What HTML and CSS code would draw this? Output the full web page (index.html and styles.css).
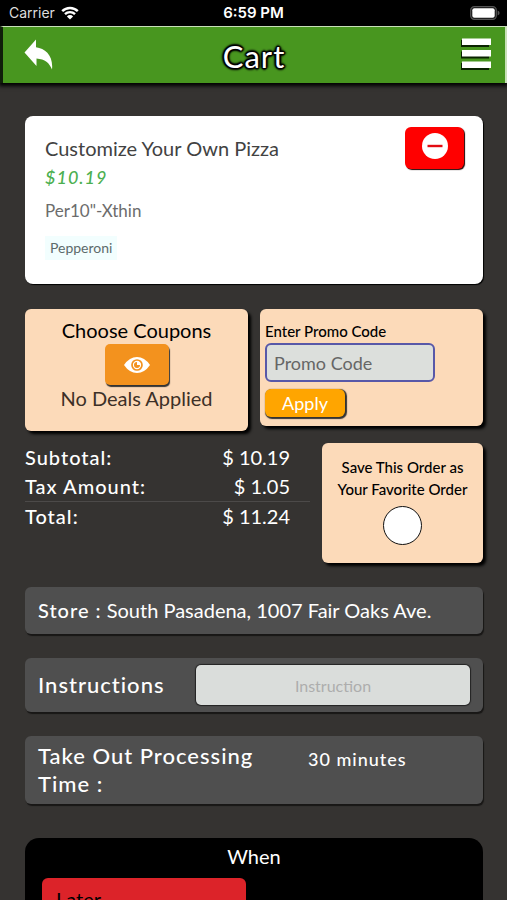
FILE: index.html
```html
<!DOCTYPE html>
<html lang="en">
<head>
<meta charset="utf-8">
<meta name="viewport" content="width=device-width, initial-scale=1">
<title>Cart</title>
<link rel="stylesheet" href="styles.css">
</head>
<body>
<div class="app">
  <div class="status">
    <div class="status-carrier">
      <span>Carrier</span>
      <svg class="wifi" viewBox="0 0 18 14" aria-hidden="true">
        <path d="M1.2 5.2a11 11 0 0 1 15.6 0M4 8.2a7 7 0 0 1 10 0" fill="none" stroke="#fff" stroke-width="2.4"/>
        <path d="M9 13.5 5.9 10.4a4.4 4.4 0 0 1 6.2 0z" fill="#fff"/>
      </svg>
    </div>
    <span class="status-time">6:59 PM</span>
    <svg class="battery" viewBox="0 0 30 14" aria-hidden="true">
      <rect x=".7" y=".7" width="25.6" height="12.6" rx="3.6" fill="#111" stroke="#555" stroke-width="1.2"/>
      <rect x="2.3" y="2.3" width="22.4" height="9.4" rx="2" fill="#fff"/>
      <path d="M27.6 4.6q2 .6 2 2.4t-2 2.4z" fill="#555"/>
    </svg>
  </div>

  <header class="topbar">
    <button class="icon-button back-button" type="button" aria-label="Back">
      <svg class="back" viewBox="0 0 29 31" aria-hidden="true">
        <path d="M.5 13.5 12 .5v7.8C21.500 9.500 29.500 17 28 30.500 25.500 24 21 20.200 12.500 19.500v7.500z" fill="#fff"/>
      </svg>
    </button>
    <h1 class="title">Cart</h1>
    <button class="icon-button menu-button" type="button" aria-label="Menu">
      <svg class="menu" viewBox="0 0 30 32" aria-hidden="true">
        <path d="M0 2h28v7H0zM0 13.500h28v7H0zM0 25h28v7H0z" fill="#0a2300"/>
        <path d="M1 .5h29v6.500H1zM1 12h29v6.500H1zM1 23.500h29v6.500H1z" fill="#fff"/>
      </svg>
    </button>
  </header>

  <main class="content">
    <section class="item">
      <div class="item-info">
        <h2 class="item-name">Customize Your Own Pizza</h2>
        <p class="item-price">$10.19</p>
        <p class="item-size">Per10"-Xthin</p>
        <span class="topping">Pepperoni</span>
      </div>
      <button class="remove" type="button" aria-label="Remove item">
        <svg class="minus" viewBox="0 0 26 26" aria-hidden="true">
          <circle cx="13" cy="13" r="13" fill="#fff"/>
          <path d="M5.500 13h15" stroke="#e30b12" stroke-width="2.400"/>
        </svg>
      </button>
    </section>

    <div class="deals">
      <section class="panel coupons">
        <h2 class="coupons-title">Choose Coupons</h2>
        <button class="view" type="button" aria-label="View coupons">
          <svg class="eye" viewBox="0 0 26 16" aria-hidden="true">
            <path d="M0 8Q5.500 0 13 0t13 8q-5.500 8-13 8T0 8z" fill="#fff"/>
            <circle cx="13" cy="8" r="5" fill="#fff" stroke="#f3921e" stroke-width="1.700"/>
            <path d="M13 5a3 3 0 1 0 3 3h-3z" fill="#f3921e"/>
          </svg>
        </button>
        <p class="coupons-state">No Deals Applied</p>
      </section>
      <form class="panel promo">
        <label class="promo-label" for="promo">Enter Promo Code</label>
        <input class="promo-input" id="promo" type="text" placeholder="Promo Code">
        <button class="apply" type="button">Apply</button>
      </form>
    </div>

    <div class="summary">
      <table class="totals">
        <tbody>
          <tr><th scope="row">Subtotal:</th><td>$ 10.19</td></tr>
          <tr><th scope="row">Tax Amount:</th><td>$ 1.05</td></tr>
          <tr class="total"><th scope="row">Total:</th><td>$ 11.24</td></tr>
        </tbody>
      </table>
      <div class="panel favorite">
        <label for="favorite">Save This Order as Your Favorite Order</label>
        <input class="favorite-check" id="favorite" type="checkbox">
      </div>
    </div>

    <section class="bar">
      <p class="store"><span class="store-label">Store :</span> South Pasadena, 1007 Fair Oaks Ave.</p>
    </section>

    <section class="bar instructions">
      <label class="instruction-label" for="instruction">Instructions</label>
      <input class="instruction-input" id="instruction" type="text" placeholder="Instruction">
    </section>

    <section class="bar processing">
      <p class="processing-label">Take Out Processing Time :</p>
      <p class="minutes">30 minutes</p>
    </section>

    <section class="when">
      <h2 class="when-title">When</h2>
      <button class="later" type="button">Later</button>
    </section>
  </main>
</div>
</body>
</html>
```
FILE: styles.css
```css
* {
  box-sizing: border-box;
}

body,
h1,
h2,
p {
  margin: 0;
  font-weight: 400;
}

body {
  background: #353331;
  color: #fff;
  font-family: Lato, "Liberation Sans", sans-serif;
  font-size: 20px;
  line-height: 28px;
}

h2 {
  font-size: 20px;
}

button,
input {
  margin: 0;
  font: inherit;
}

button {
  border: 0;
  padding: 0;
  cursor: pointer;
}

svg {
  display: block;
}

.app {
  display: flex;
  flex-direction: column;
  height: 100vh;
}

/* Status bar */
.status {
  display: grid;
  grid-template-columns: 1fr auto 1fr;
  align-items: center;
  flex: none;
  height: 26px;
  padding: 0 7px;
  background: #000;
  font-family: Inter, "Liberation Sans", sans-serif;
  font-size: 14px;
  line-height: 26px;
}

.status-carrier {
  display: flex;
  align-items: center;
  gap: 6px;
  padding-left: 2px;
  color: #ddd;
}

.status-time {
  font-size: 15px;
  font-weight: 600;
}

.wifi {
  width: 18px;
  height: 14px;
}

.battery {
  justify-self: end;
  width: 30px;
  height: 14px;
}

/* Header */
.topbar {
  display: grid;
  grid-template-columns: 1fr auto 1fr;
  align-items: center;
  flex: none;
  height: 57px;
  padding: 0 14px 2px;
  background: #48961f;
  border: solid #c8e0b8;
  border-width: 1px 2px 0 0;
  border-left: 3px solid #10200a;
  box-shadow: 0 2px 4px 1px #000;
}

.icon-button {
  background: none;
}

.back-button {
  justify-self: start;
  padding-left: 7px;
}

.menu-button {
  justify-self: end;
}

.back {
  width: 29px;
  height: 31px;
}

.menu {
  width: 30px;
  height: 32px;
}

.title {
  padding-top: 4px;
  font-size: 31px;
  line-height: 40px;
  letter-spacing: 1px;
  text-shadow: -1px -1px 1px #000, 1px -1px 1px #000, -1px 1px 1px #000, 1px 1px 1px #000, 0 2px 2px #000, 0 -2px 2px #000, 2px 0 2px #000, -2px 0 2px #000;
}

/* Scrolling content */
.content {
  flex: 1;
  min-height: 0;
  overflow-y: auto;
  scrollbar-width: none;
  padding: 33px 24px 24px 25px;
}

.item {
  display: flex;
  justify-content: space-between;
  align-items: flex-start;
  padding: 11px 19px 24px 20px;
  border-radius: 8px;
  background: #fff;
  box-shadow: 1px 1px 1px #000;
}

.item-name {
  padding: 7px 0 3px;
  color: #424242;
}

.item-price {
  color: #4caf50;
  font-size: 18px;
  font-weight: 500;
  line-height: 24px;
  font-style: italic;
  letter-spacing: 1px;
}

.item-size {
  padding: 9px 0 12px;
  color: #6c6c6c;
  font-size: 17px;
  line-height: 26px;
}

.topping {
  display: block;
  width: fit-content;
  padding: 0 5px;
  background: #f2fefe;
  color: #5d6b6b;
  font-size: 14px;
  line-height: 24px;
}

.remove {
  display: flex;
  justify-content: center;
  width: 59px;
  height: 42px;
  padding-top: 6px;
  border-radius: 6px;
  background: #f00;
  box-shadow: 1px 1px 1px #200;
}

.minus {
  width: 26px;
  height: 26px;
}

.panel {
  border-radius: 6px;
  background: #fcdab9;
  box-shadow: 3px 3px 3px #000;
  color: #000;
}

.deals {
  display: grid;
  grid-template-columns: 1fr 1fr;
  align-items: start;
  gap: 12px;
  margin-top: 25px;
}

.coupons {
  display: flex;
  flex-direction: column;
  align-items: center;
  padding: 8px 10px 20px;
}

.coupons-title {
  line-height: 27px;
}

.view {
  display: flex;
  align-items: center;
  justify-content: center;
  width: 64px;
  height: 41px;
  border-radius: 5px;
  background: #f3921e;
  box-shadow: 1px 2px 1px #333;
}

.eye {
  width: 26px;
  height: 16px;
}

.coupons-state {
  line-height: 26px;
  color: #3d3027;
}

.promo {
  display: flex;
  flex-direction: column;
  align-items: flex-start;
  padding: 10px 5px 9px;
}

.promo-label {
  font-size: 15px;
  font-weight: 500;
  line-height: 24px;
}

.promo-input {
  width: 80%;
  height: 39px;
  margin-bottom: 7px;
  padding: 0 7px;
  border: 2px solid #5858a8;
  border-radius: 6px;
  background: #dcdfdc;
  font-size: 18px;
}

.promo-input::placeholder {
  color: #666;
  opacity: 1;
}

.apply {
  width: 80px;
  height: 28px;
  border-radius: 6px;
  background: #ffa500;
  box-shadow: 1px 1px 1px 1px #333;
  color: #fff;
  font-size: 18px;
}

.summary {
  display: grid;
  grid-template-columns: 285fr 161fr;
  align-items: start;
  gap: 12px;
  margin-top: 12px;
}

.totals {
  width: 100%;
  border-collapse: collapse;
}

.totals th,
.totals td {
  padding: 0;
  font-weight: 400;
  line-height: 29px;
}

.totals th {
  text-align: left;
  font-weight: 500;
  letter-spacing: 1px;
}

.totals td {
  padding-right: 20px;
  text-align: right;
}

.total th,
.total td {
  border-top: 1px solid #4c4a49;
}

.favorite {
  display: flex;
  flex-direction: column;
  align-items: center;
  padding: 13px 10px 18px;
  font-size: 15px;
  font-weight: 500;
  line-height: 22px;
  text-align: center;
}

.favorite-check {
  appearance: none;
  width: 39px;
  height: 39px;
  margin-top: 6px;
  border: 1px solid #111;
  border-radius: 50%;
  background: #fff;
}

.bar {
  margin-top: 24px;
  padding: 8px 13px;
  border-radius: 6px;
  background: #4f4f4f;
  box-shadow: 1px 2px 1px #181716;
}

.store {
  line-height: 31px;
}

.store-label {
  font-weight: 500;
  letter-spacing: 1px;
}

.instructions {
  display: flex;
  align-items: center;
  justify-content: space-between;
  padding: 7px 13px;
}

.instruction-label {
  font-size: 22px;
  font-weight: 500;
  letter-spacing: 1px;
}

.instruction-input {
  width: 274px;
  height: 40px;
  border: 0;
  border-radius: 5px;
  background: #dadddb;
  box-shadow: 0 0 1px 1px #222;
  font-size: 16px;
  text-align: center;
}

.instruction-input::placeholder {
  color: #adadad;
  opacity: 1;
}

.processing {
  display: grid;
  grid-template-columns: 5fr 3fr;
  padding: 6px 13px;
}

.processing-label {
  font-size: 22px;
  font-weight: 500;
  letter-spacing: 1px;
}

.minutes {
  font-size: 18px;
  font-weight: 500;
  line-height: 34px;
  letter-spacing: 1px;
}

.when {
  margin-top: 34px;
  padding: 4px 17px 16px;
  border-radius: 14px;
  background: #000;
}

.when-title {
  padding-bottom: 8px;
  text-align: center;
}

.later {
  width: 48%;
  height: 42px;
  padding: 0 14px;
  border-radius: 6px;
  background: #dc2329;
  color: #000;
  text-align: left;
}
```
